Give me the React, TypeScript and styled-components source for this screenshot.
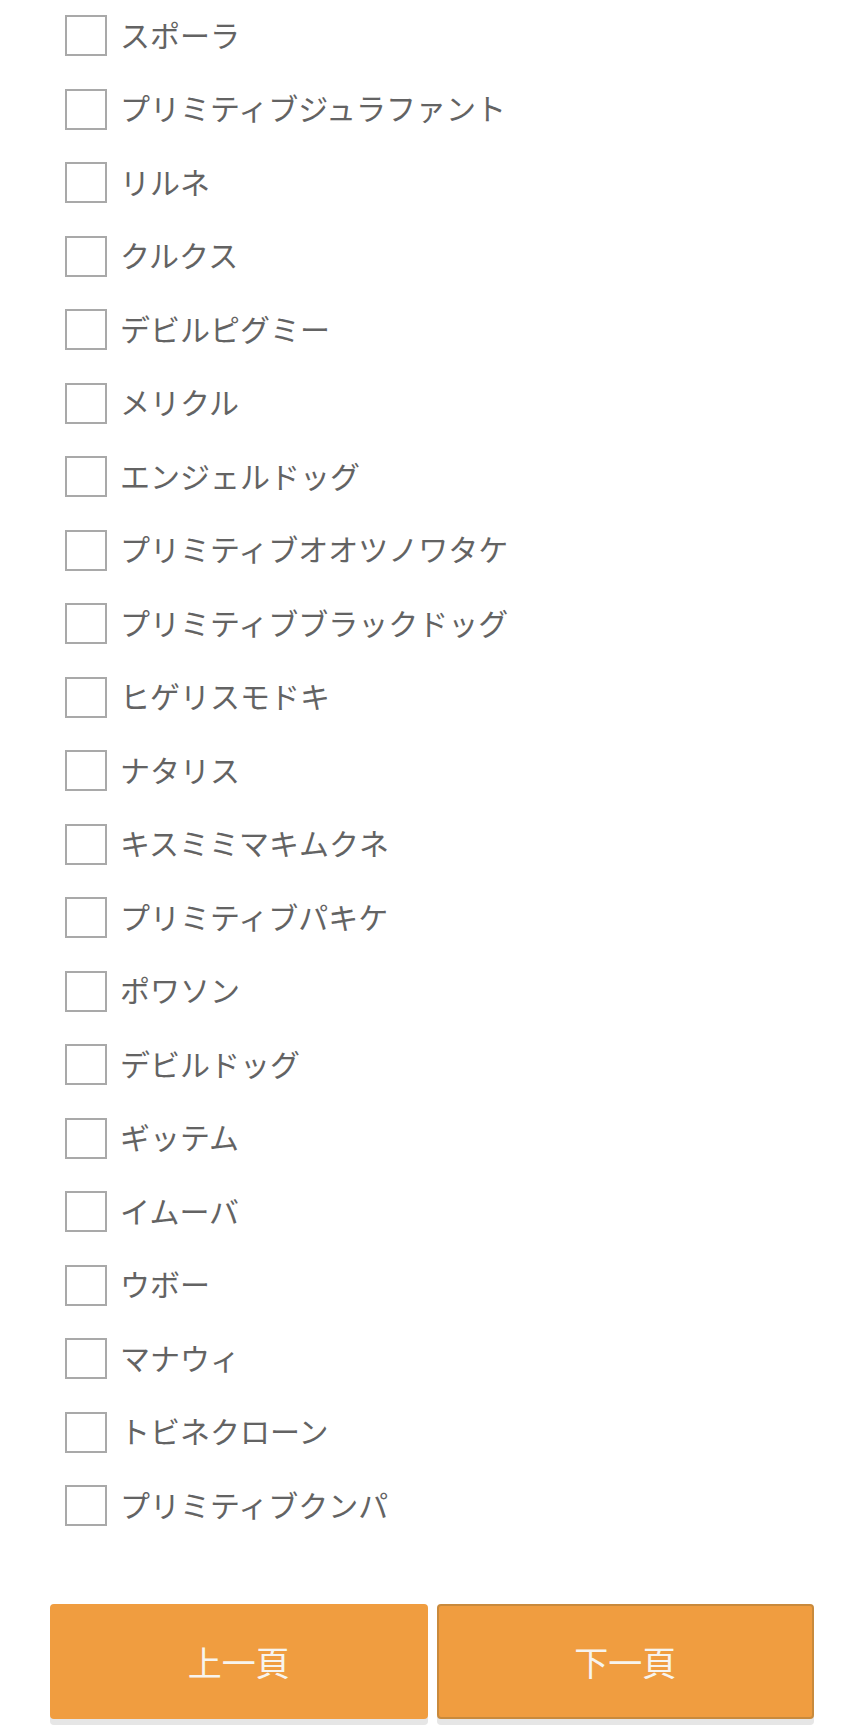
import React, { useState } from 'react';
import styled, { createGlobalStyle } from 'styled-components';

const GlobalStyle = createGlobalStyle`
  html, body {
    margin: 0;
    padding: 0;
    background: #ffffff;
    font-family: "Noto Sans CJK JP", "Noto Sans", sans-serif;
  }
`;

const monsters = [
  'スポーラ',
  'プリミティブジュラファント',
  'リルネ',
  'クルクス',
  'デビルピグミー',
  'メリクル',
  'エンジェルドッグ',
  'プリミティブオオツノワタケ',
  'プリミティブブラックドッグ',
  'ヒゲリスモドキ',
  'ナタリス',
  'キスミミマキムクネ',
  'プリミティブパキケ',
  'ポワソン',
  'デビルドッグ',
  'ギッテム',
  'イムーバ',
  'ウボー',
  'マナウィ',
  'トビネクローン',
  'プリミティブクンパ',
];

export default function App() {
  const [checked, setChecked] = useState<Record<number, boolean>>({});

  const toggle = (i: number) => {
    setChecked((prev) => ({ ...prev, [i]: !prev[i] }));
  };

  return (
    <Page>
      <GlobalStyle />
      <List>
        {monsters.map((name, i) => (
          <Row key={name} onClick={() => toggle(i)}>
            <Box $checked={!!checked[i]} />
            <Label>{name}</Label>
          </Row>
        ))}
      </List>
      <Pager>
        <PageButton>上一頁</PageButton>
        <PageButton $active>下一頁</PageButton>
      </Pager>
    </Page>
  );
}

const Page = styled.div`
  width: 864px;
  height: 1734px;
  box-sizing: border-box;
  padding-top: 15px;
  overflow: hidden;
`;

const List = styled.ul`
  list-style: none;
  margin: 0;
  padding: 0 0 0 65px;
  display: flex;
  flex-direction: column;
  gap: 32.5px;
`;

const Row = styled.li`
  display: flex;
  align-items: center;
  height: 41px;
  gap: 13px;
  cursor: pointer;
`;

const Box = styled.span<{ $checked: boolean }>`
  flex: none;
  width: 42px;
  height: 41px;
  box-sizing: border-box;
  border: 2px solid #a9a9a9;
  background: ${(p) => (p.$checked ? '#f09d40' : '#ffffff')};
`;

const Label = styled.span`
  font-size: 30px;
  line-height: 41px;
  color: #636363;
  white-space: nowrap;
  margin-top: -3px;
`;

const Pager = styled.div`
  display: grid;
  grid-template-columns: 1fr 1fr;
  gap: 9px;
  padding: 0 50px;
  margin-top: 78px;
`;

const PageButton = styled.button<{ $active?: boolean }>`
  height: 115px;
  border-radius: 4px;
  border: 2px solid ${(p) => (p.$active ? '#c98a3c' : '#f09d40')};
  background: #f09d40;
  color: #f7f4ee;
  font-family: "Noto Sans CJK JP", "Noto Sans", sans-serif;
  font-size: 34px;
  box-shadow: 0 6px 0 #e6e6e6;
  cursor: pointer;
`;
